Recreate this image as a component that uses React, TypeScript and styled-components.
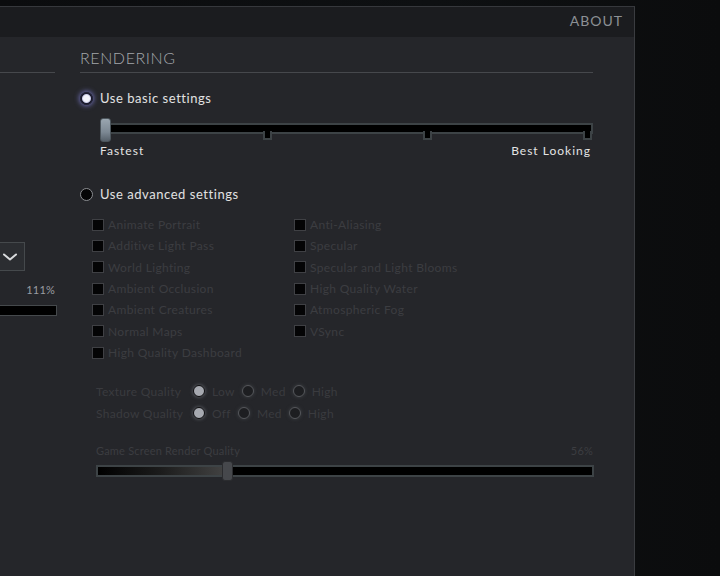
import * as React from 'react';
import styled, { createGlobalStyle } from 'styled-components';

const GlobalStyle = createGlobalStyle`
  html, body {
    margin: 0;
    padding: 0;
    background: #0a0b0d;
  }
  * {
    box-sizing: border-box;
  }
`;

const Page = styled.div`
  width: 720px;
  height: 576px;
  overflow: hidden;
  padding-top: 6px;
  display: flex;
  background: linear-gradient(90deg, #0b0c0e 0%, #0e1012 60%, #0b0c0d 100%);
  font-family: Lato, 'Open Sans', sans-serif;
`;

const Panel = styled.div`
  width: 635px;
  height: 570px;
  display: flex;
  flex-direction: column;
  background: #25262a;
  border-top: 1px solid #36383c;
  border-right: 1px solid #3a3c40;
`;

const Header = styled.div`
  height: 30px;
  display: flex;
  align-items: center;
  justify-content: flex-end;
  padding-right: 11px;
  padding-bottom: 3px;
  background: #1b1c1f;
`;

const HeaderLink = styled.span`
  font-size: 14px;
  letter-spacing: 1px;
  color: #8c9094;
`;

const Body = styled.div`
  flex: 1;
  display: flex;
  gap: 25px;
`;

const Column = styled.div<{ $width: number }>`
  width: ${p => p.$width}px;
  display: flex;
  flex-direction: column;
`;

const SectionTitle = styled.div`
  height: 36px;
  padding-top: 11px;
  font-size: 16px;
  line-height: 20px;
  font-weight: 300;
  letter-spacing: 0.6px;
  color: #a3a7ab;
  border-bottom: 1px solid #46484c;
`;

const RadioRow = styled.label<{ $top: number }>`
  display: flex;
  align-items: center;
  gap: 7px;
  height: 16px;
  margin-top: ${p => p.$top}px;
  font-size: 13px;
  letter-spacing: 0.55px;
  color: #e2e2e2;
`;

const BigRadio = styled.span<{ $on?: boolean }>`
  width: 13px;
  height: 13px;
  border-radius: 50%;
  flex-shrink: 0;
  background: ${p => (p.$on ? 'radial-gradient(circle, #f2f3fa 0 3px, #c9cbe6 4px, #1a1a2c 5px)' : '#050506')};
  border: ${p => (p.$on ? '1px solid #232338' : '1.5px solid #8c8e92')};
  box-shadow: ${p => (p.$on ? '0 0 5px 1px #6c6cb0' : 'none')};
`;

const SliderWrap = styled.div<{ $left: number; $width: number; $top: number; $height: number; $trackTop: number }>`
  position: relative;
  margin-left: ${p => p.$left}px;
  margin-top: ${p => p.$top}px;
  padding-top: ${p => p.$trackTop}px;
  width: ${p => p.$width}px;
  height: ${p => p.$height}px;
`;

const Track = styled.div<{ $height: number }>`
  position: relative;
  width: 100%;
  height: ${p => p.$height}px;
  background: #000;
  border: 2px solid #3d4346;
`;

const Tick = styled.div`
  position: absolute;
  top: 6px;
  width: 9px;
  height: 9px;
  background: #000;
  border: 2px solid #3d4346;
  border-top: none;
`;

const Fill = styled.div`
  height: 100%;
  background: linear-gradient(90deg, #000 0%, #1c1c1c 50%, #424242 100%);
`;

const Handle = styled.div<{ $blue?: boolean; $height: number }>`
  position: absolute;
  top: 0;
  width: 11px;
  height: ${p => p.$height}px;
  border-radius: 3px;
  background: ${p => (p.$blue ? 'linear-gradient(180deg, #9aa6b0 0%, #7c8893 60%, #56606a 100%)' : '#46484c')};
  border: 1px solid ${p => (p.$blue ? '#4c555c' : '#2b2c2f')};
`;

const SliderLabels = styled.div`
  display: flex;
  justify-content: space-between;
  margin: 2px 2px 0 20px;
  height: 14px;
  font-size: 12px;
  line-height: 14px;
  letter-spacing: 1px;
  color: #e4e4e4;
`;

const CheckGrid = styled.div`
  display: grid;
  grid-template-columns: 202px auto;
  grid-template-rows: repeat(7, 21.33px);
  grid-auto-flow: column;
  margin: 12px 0 0 12px;
`;

const CheckItem = styled.label`
  display: flex;
  align-items: center;
  gap: 4px;
  font-size: 12px;
  letter-spacing: 0.35px;
  color: #3c3d41;
`;

const Box = styled.span`
  width: 12px;
  height: 12px;
  background: #040405;
  border: 1.5px solid #3f4044;
  flex-shrink: 0;
`;

const QualityRow = styled.div<{ $top: number }>`
  display: flex;
  align-items: center;
  height: 22px;
  margin: ${p => p.$top}px 0 0 16px;
  font-size: 12px;
  letter-spacing: 0.3px;
  color: #3a3b3f;
`;

const QualityLabel = styled.span`
  width: 97px;
`;

const Option = styled.span`
  display: flex;
  align-items: center;
  gap: 7px;
  margin-right: 7px;
`;

const SmallRadio = styled.span<{ $on?: boolean }>`
  width: 12px;
  height: 12px;
  border-radius: 50%;
  flex-shrink: 0;
  background: ${p => (p.$on ? '#a6a9b0' : '#1d1e21')};
  border: 1.5px solid ${p => (p.$on ? '#0c0c0e' : '#55575b')};
  box-shadow: 0 0 3px 1px ${p => (p.$on ? '#4a4c52' : '#34363a')};
`;

const ValueRow = styled.div<{ $top: number; $left: number; $color: string; $size: number }>`
  display: flex;
  justify-content: space-between;
  height: 14px;
  margin: ${p => p.$top}px 0 0 ${p => p.$left}px;
  font-size: ${p => p.$size}px;
  line-height: 14px;
  letter-spacing: 0.2px;
  color: ${p => p.$color};
`;

const Dropdown = styled.div`
  margin-top: 169px;
  margin-left: -20px;
  width: 45px;
  height: 29px;
  display: flex;
  align-items: center;
  justify-content: flex-end;
  padding-right: 6px;
  background: #2b2d31;
  border: 1.5px solid #45494c;
`;

const Bar = styled.div`
  margin-top: 8px;
  margin-left: -20px;
  width: 77px;
  height: 11px;
  background: #000;
  border: 1.5px solid #45494c;
`;

const Chevron = () => (
  <svg width="16" height="12" viewBox="0 0 16 12">
    <path d="M2 3.5 L8 8.5 L14 3.5" fill="none" stroke="#d8dadc" strokeWidth="2" strokeLinecap="round" strokeLinejoin="round" />
  </svg>
);

const leftChecks = [
  'Animate Portrait',
  'Additive Light Pass',
  'World Lighting',
  'Ambient Occlusion',
  'Ambient Creatures',
  'Normal Maps',
  'High Quality Dashboard'
];

const rightChecks = [
  'Anti-Aliasing',
  'Specular',
  'Specular and Light Blooms',
  'High Quality Water',
  'Atmospheric Fog',
  'VSync'
];

const qualities = [
  { label: 'Texture Quality', options: ['Low', 'Med', 'High'], top: 17 },
  { label: 'Shadow Quality', options: ['Off', 'Med', 'High'], top: 0 }
];

export default function App() {
  const renderQuality = 56;
  return (
    <>
      <GlobalStyle />
      <Page>
        <Panel>
          <Header>
            <HeaderLink>ABOUT</HeaderLink>
          </Header>
          <Body>
            <Column $width={55}>
              <SectionTitle />
              <Dropdown>
                <Chevron />
              </Dropdown>
              <ValueRow $top={12} $left={0} $size={11} $color="#9a9da1" style={{ justifyContent: 'flex-end' }}>
                111%
              </ValueRow>
              <Bar />
            </Column>
            <Column $width={513}>
              <SectionTitle>RENDERING</SectionTitle>
              <RadioRow $top={17}>
                <BigRadio $on />
                Use basic settings
              </RadioRow>
              <SliderWrap $left={20} $width={493} $top={12} $height={24} $trackTop={5}>
                <Track $height={11}>
                  <Tick style={{ left: 161 }} />
                  <Tick style={{ left: 321 }} />
                  <Tick style={{ left: 481 }} />
                </Track>
                <Handle $blue $height={24} style={{ left: 0 }} />
              </SliderWrap>
              <SliderLabels>
                <span>Fastest</span>
                <span>Best Looking</span>
              </SliderLabels>
              <RadioRow $top={28}>
                <BigRadio />
                Use advanced settings
              </RadioRow>
              <CheckGrid>
                {leftChecks.concat(rightChecks).map(name => (
                  <CheckItem key={name}>
                    <Box />
                    {name}
                  </CheckItem>
                ))}
              </CheckGrid>
              {qualities.map(q => (
                <QualityRow key={q.label} $top={q.top}>
                  <QualityLabel>{q.label}</QualityLabel>
                  {q.options.map((o, i) => (
                    <Option key={o}>
                      <SmallRadio $on={i === 0} />
                      {o}
                    </Option>
                  ))}
                </QualityRow>
              ))}
              <ValueRow $top={20} $left={16} $size={11} $color="#3c3d41">
                <span>Game Screen Render Quality</span>
                <span>{renderQuality}%</span>
              </ValueRow>
              <SliderWrap $left={16} $width={498} $top={3} $height={20} $trackTop={4}>
                <Track $height={12}>
                  <Fill style={{ width: 126 }} />
                </Track>
                <Handle $height={20} style={{ left: 126 }} />
              </SliderWrap>
            </Column>
          </Body>
        </Panel>
      </Page>
    </>
  );
}
